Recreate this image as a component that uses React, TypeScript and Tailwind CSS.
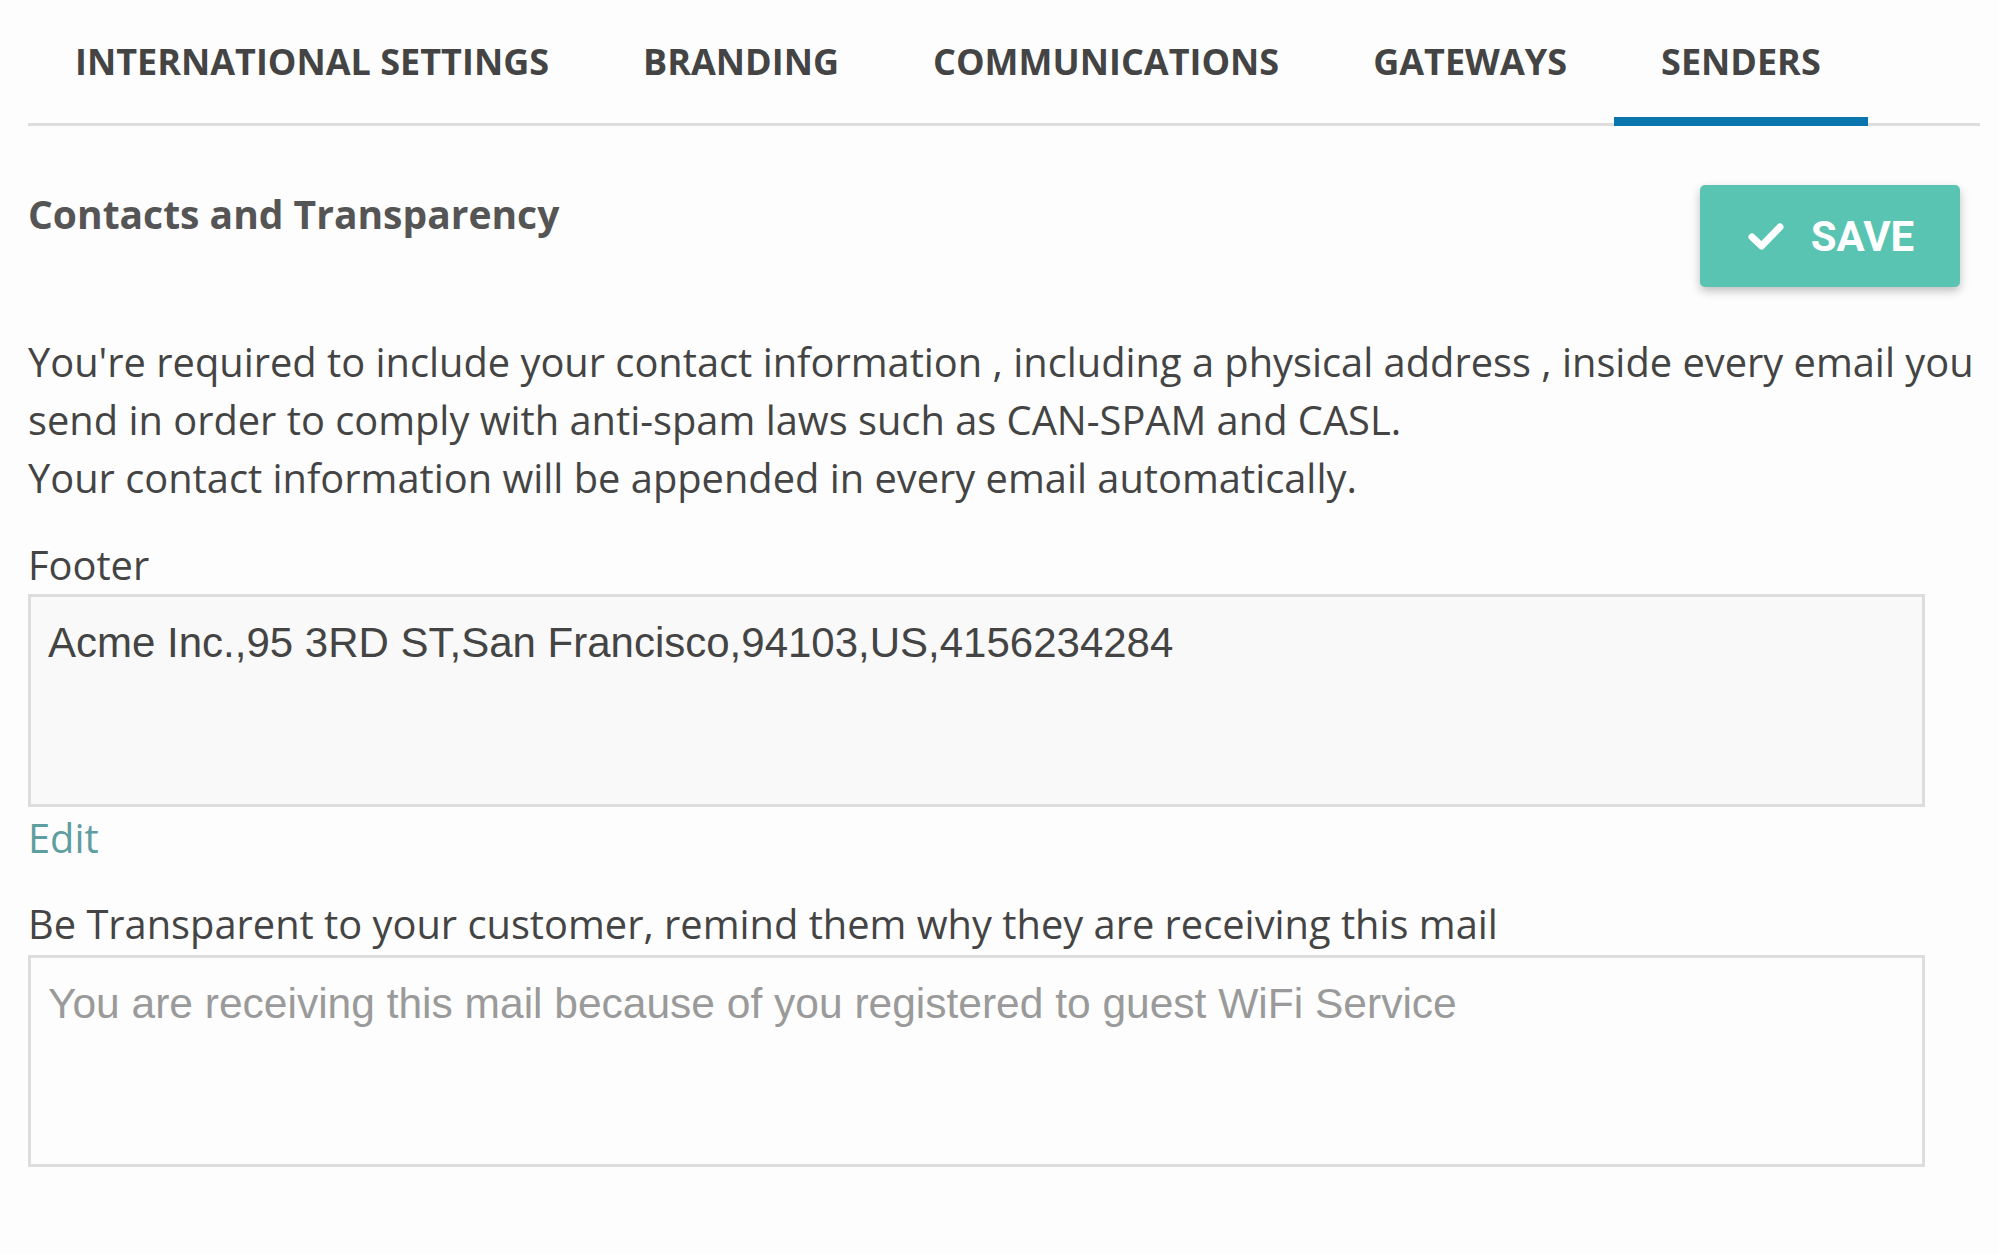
import React from 'react';

const tabs = ['INTERNATIONAL SETTINGS', 'BRANDING', 'COMMUNICATIONS', 'GATEWAYS', 'SENDERS'];

const CheckIcon = () => (
  <svg width="36" height="28" viewBox="0 0 36 28" fill="none">
    <path d="M4 15 L13.5 24 L32 5" stroke="white" strokeWidth="7" strokeLinecap="round" strokeLinejoin="round" />
  </svg>
);

const App = () => {
  return (
    <div className="min-h-screen bg-[#fdfdfd] pl-[28px] pr-[19px] font-['Open_Sans',sans-serif] text-[#444]">
      <div className="flex border-b-[3px] border-[#dddddd]">
        {tabs.map((tab, i) => (
          <div
            key={tab}
            className={
              i === tabs.length - 1
                ? '-mb-[3px] flex h-[126px] items-center border-b-[9px] border-[#0a76ad] px-[47px] pt-[6px] text-[36px] font-bold text-[#444]'
                : '-mb-[3px] flex h-[126px] items-center border-b-[9px] border-transparent px-[47px] pt-[6px] text-[36px] font-bold text-[#444]'
            }
          >
            {tab}
          </div>
        ))}
      </div>

      <div className="flex items-start justify-between pt-[59px]">
        <h2 className="mt-[4px] text-[39px] font-bold leading-[50px] text-[#555]">Contacts and Transparency</h2>
        <button className="mr-[20px] flex h-[102px] w-[260px] items-center justify-center gap-[27px] rounded-[5px] bg-[#58c4b1] pl-[2px] font-['Roboto',sans-serif] text-[42px] font-bold text-white shadow-[0_4px_10px_rgba(0,0,0,0.25)]">
          <CheckIcon />
          SAVE
        </button>
      </div>

      <p className="mt-[46px] whitespace-nowrap text-[39.8px] leading-[58px]">
        You're required to include your contact information , including a physical address , inside every email you
        <br />
        send in order to comply with anti-spam laws such as CAN-SPAM and CASL.
        <br />
        Your contact information will be appended in every email automatically.
      </p>

      <div className="mt-[29px] text-[39.8px] leading-[58px]">Footer</div>
      <div className="h-[213px] w-[1897px] border-[3px] border-[#dddddd] bg-[#f9f9f9] pl-[17px] pt-[21px] font-['Liberation_Sans',Arial,sans-serif] text-[42px] leading-[49px] text-[#444]">
        Acme Inc.,95 3RD ST,San Francisco,94103,US,4156234284
      </div>
      <a className="mt-[2px] block text-[39.8px] leading-[58px] text-[#5f9ea0]" href="#">
        Edit
      </a>

      <div className="mt-[28px] text-[39.8px] leading-[58px]">
        Be Transparent to your customer, remind them why they are receiving this mail
      </div>
      <div className="mt-[2px] h-[212px] w-[1897px] border-[3px] border-[#dddddd] bg-[#fdfdfd] pl-[17px] pt-[21px] font-['Liberation_Sans',Arial,sans-serif] text-[42.5px] leading-[49px] text-[#9a9a9a]">
        You are receiving this mail because of you registered to guest WiFi Service
      </div>
    </div>
  );
};

export default App;
